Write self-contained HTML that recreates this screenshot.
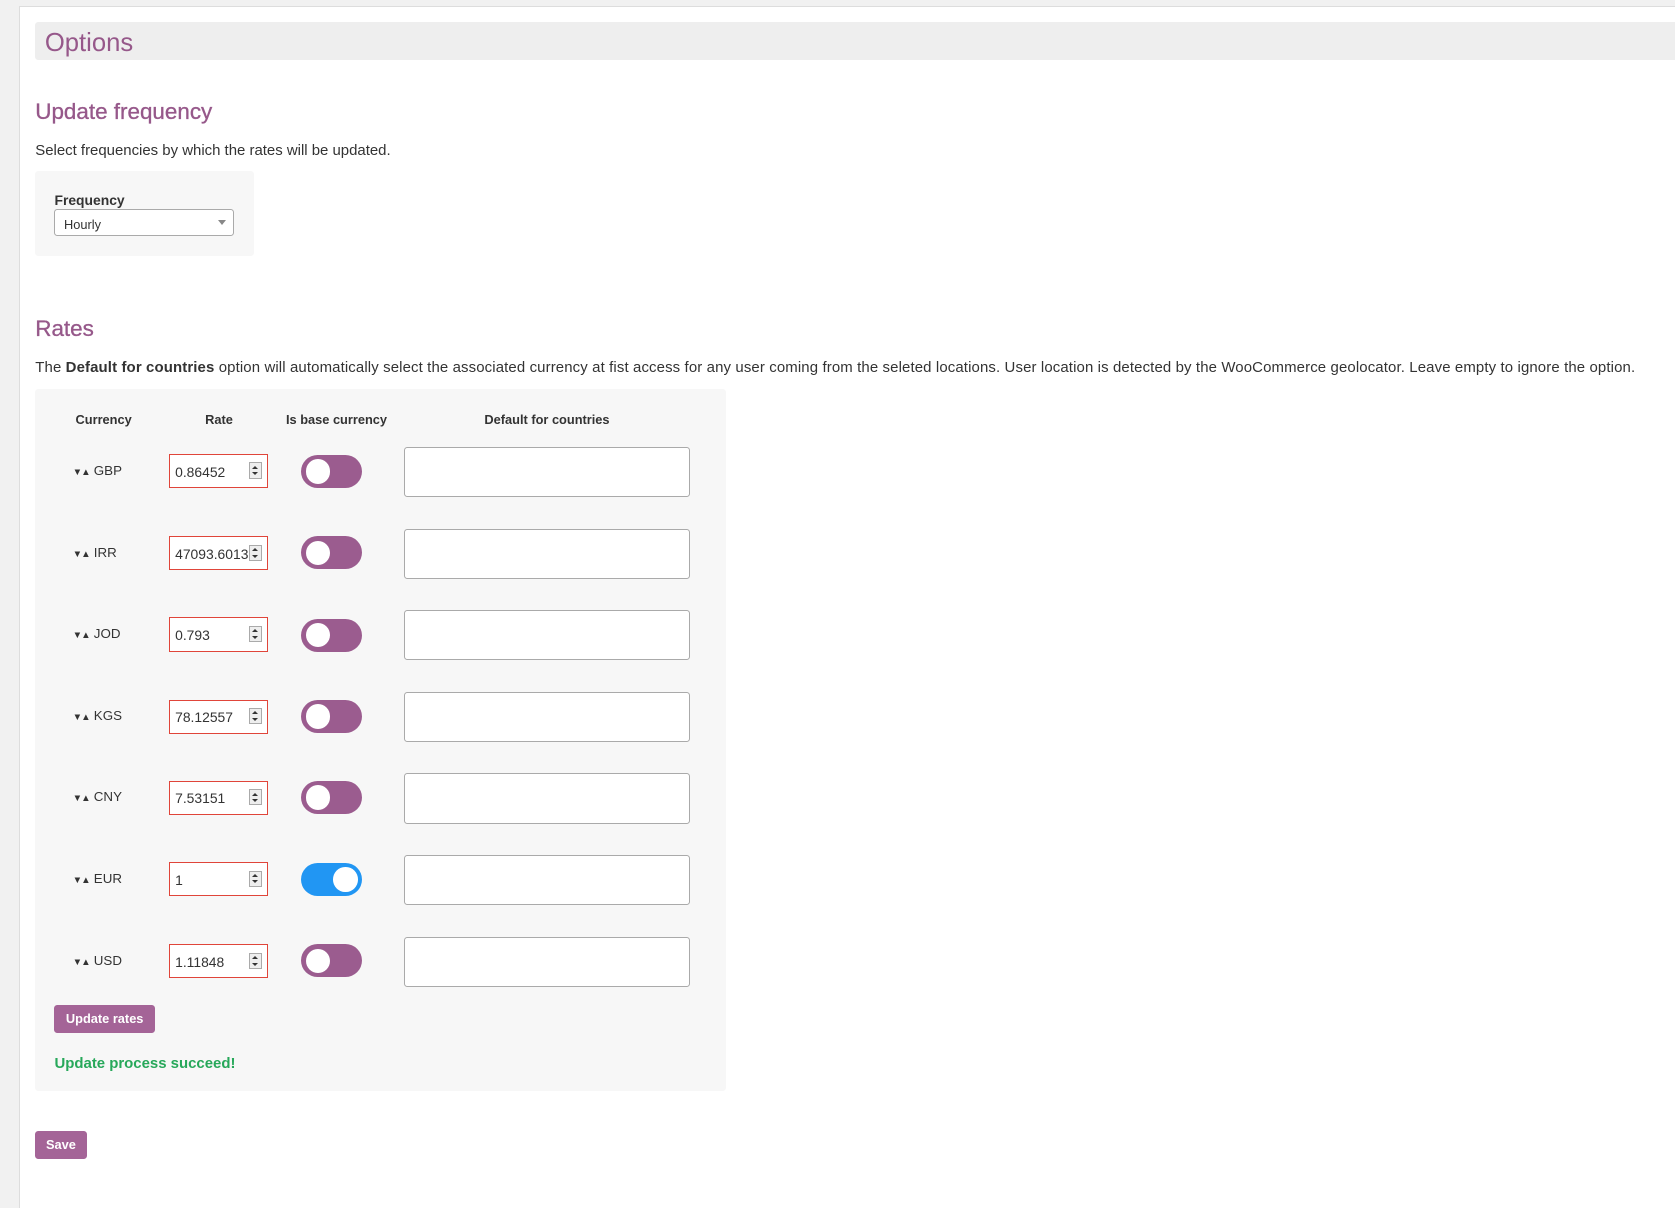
<!DOCTYPE html>
<html><head><meta charset="utf-8"><style>
html,body{margin:0;padding:0;background:#f1f1f1;overflow:hidden;}
body{width:1675px;height:1208px;}
#w{zoom:1.0683;position:relative;width:1568px;height:1131px;font-family:"Liberation Sans",sans-serif;color:#333;}
.panel{position:absolute;left:18px;top:6px;right:0;height:1124px;background:#fff;border-left:1px solid #ddd;border-top:1px solid #ddd;border-bottom:1px solid #999;}
.abs{position:absolute;}
.ttl{position:absolute;left:33px;right:0;top:21px;height:35px;background:#eee;border-radius:3px 0 0 3px;}
.ttl span{position:absolute;left:9px;top:6px;font-size:24px;color:#96588a;}
h2{position:absolute;margin:0;font-size:21px;font-weight:normal;color:#96588a;left:33px;-webkit-text-stroke:0.3px #96588a;}
.p{position:absolute;left:33px;font-size:14px;white-space:nowrap;color:#333;}
.box{position:absolute;background:#f7f7f7;border-radius:3px;}
.sel{position:absolute;left:51px;top:196px;width:166px;height:23px;background:#fff;border:1px solid #aaa;border-radius:3px;font-size:12px;}
.sel span{position:absolute;left:8px;top:6px;}
.sel i{position:absolute;right:6px;top:9px;border-left:4px solid transparent;border-right:4px solid transparent;border-top:5px solid #888;}
.th{position:absolute;top:386px;font-size:12px;font-weight:bold;transform:translateX(-50%);white-space:nowrap;}
.cur{position:absolute;left:68px;font-size:12.5px;}
.cur small{font-size:9px;letter-spacing:-1px;margin-right:4px;}
.rate{position:absolute;left:158px;width:91px;height:30px;border:1px solid #e0453a;background:#fff;font-size:13px;overflow:hidden;}
.rate span{position:absolute;left:5px;top:8px;white-space:nowrap;}
.spin{position:absolute;left:74px;top:7px;width:12px;height:15px;background:#eee;border:1px solid #aaa;box-sizing:border-box;}
.spin:before{content:"";position:absolute;left:2px;top:2px;border-left:3px solid transparent;border-right:3px solid transparent;border-bottom:3px solid #333;}
.spin:after{content:"";position:absolute;left:2px;bottom:2px;border-left:3px solid transparent;border-right:3px solid transparent;border-top:3px solid #333;}
.tg{position:absolute;left:282px;width:57px;height:31px;border-radius:16px;background:#9b5c8f;}
.tg b{position:absolute;left:4px;top:4px;width:23px;height:23px;border-radius:50%;background:#fff;}
.tg.on{background:#2196f3;}
.tg.on b{left:30px;}
.cty{position:absolute;left:378px;width:266px;height:45px;background:#fff;border:1px solid #aaa;border-radius:3px;}
.btn{position:absolute;background:#a46497;color:#fff;font-weight:bold;font-size:12px;border-radius:3px;text-align:center;}
</style></head><body><div id="w">
<div class="panel"></div>
<div class="ttl"><span>Options</span></div>
<h2 style="top:93px">Update frequency</h2>
<div class="p" style="top:133px">Select frequencies by which the rates will be updated.</div>
<div class="box" style="left:33px;top:160px;width:205px;height:80px"></div>
<div class="abs" style="left:51px;top:180px;font-size:13px;font-weight:bold">Frequency</div>
<div class="sel"><span>Hourly</span><i></i></div>
<h2 style="top:296px">Rates</h2>
<div class="p" style="top:336px;right:0;overflow:hidden;letter-spacing:0.12px">The <b>Default for countries</b> option will automatically select the associated currency at fist access for any user coming from the seleted locations. User location is detected by the WooCommerce geolocator. Leave empty to ignore the option.</div>
<div class="box" style="left:33px;top:364px;width:647px;height:657px"></div>
<div class="th" style="left:97px">Currency</div>
<div class="th" style="left:205px">Rate</div>
<div class="th" style="left:315px">Is base currency</div>
<div class="th" style="left:512px">Default for countries</div>

<div class="cur" style="top:433px"><small>▼▲</small>GBP</div><div class="rate" style="top:425px"><span>0.86452</span><div class="spin"></div></div><div class="tg" style="top:426px"><b></b></div><div class="cty" style="top:418px"></div>
<div class="cur" style="top:510px"><small>▼▲</small>IRR</div><div class="rate" style="top:502px"><span>47093.6013</span><div class="spin"></div></div><div class="tg" style="top:502px"><b></b></div><div class="cty" style="top:495px"></div>
<div class="cur" style="top:586px"><small>▼▲</small>JOD</div><div class="rate" style="top:578px"><span>0.793</span><div class="spin"></div></div><div class="tg" style="top:579px"><b></b></div><div class="cty" style="top:571px"></div>
<div class="cur" style="top:663px"><small>▼▲</small>KGS</div><div class="rate" style="top:655px"><span>78.12557</span><div class="spin"></div></div><div class="tg" style="top:655px"><b></b></div><div class="cty" style="top:648px"></div>
<div class="cur" style="top:739px"><small>▼▲</small>CNY</div><div class="rate" style="top:731px"><span>7.53151</span><div class="spin"></div></div><div class="tg" style="top:731px"><b></b></div><div class="cty" style="top:724px"></div>
<div class="cur" style="top:815px"><small>▼▲</small>EUR</div><div class="rate" style="top:807px"><span>1</span><div class="spin"></div></div><div class="tg on" style="top:808px"><b></b></div><div class="cty" style="top:800px"></div>
<div class="cur" style="top:892px"><small>▼▲</small>USD</div><div class="rate" style="top:884px"><span>1.11848</span><div class="spin"></div></div><div class="tg" style="top:884px"><b></b></div><div class="cty" style="top:877px"></div>

<div class="btn" style="left:51px;top:941px;width:94px;height:26px;line-height:27px">Update rates</div>
<div class="abs" style="left:51px;top:988px;font-size:14px;font-weight:bold;color:#27a85a">Update process succeed!</div>
<div class="btn" style="left:33px;top:1059px;width:48px;height:26px;line-height:27px">Save</div>
</div></body></html>
